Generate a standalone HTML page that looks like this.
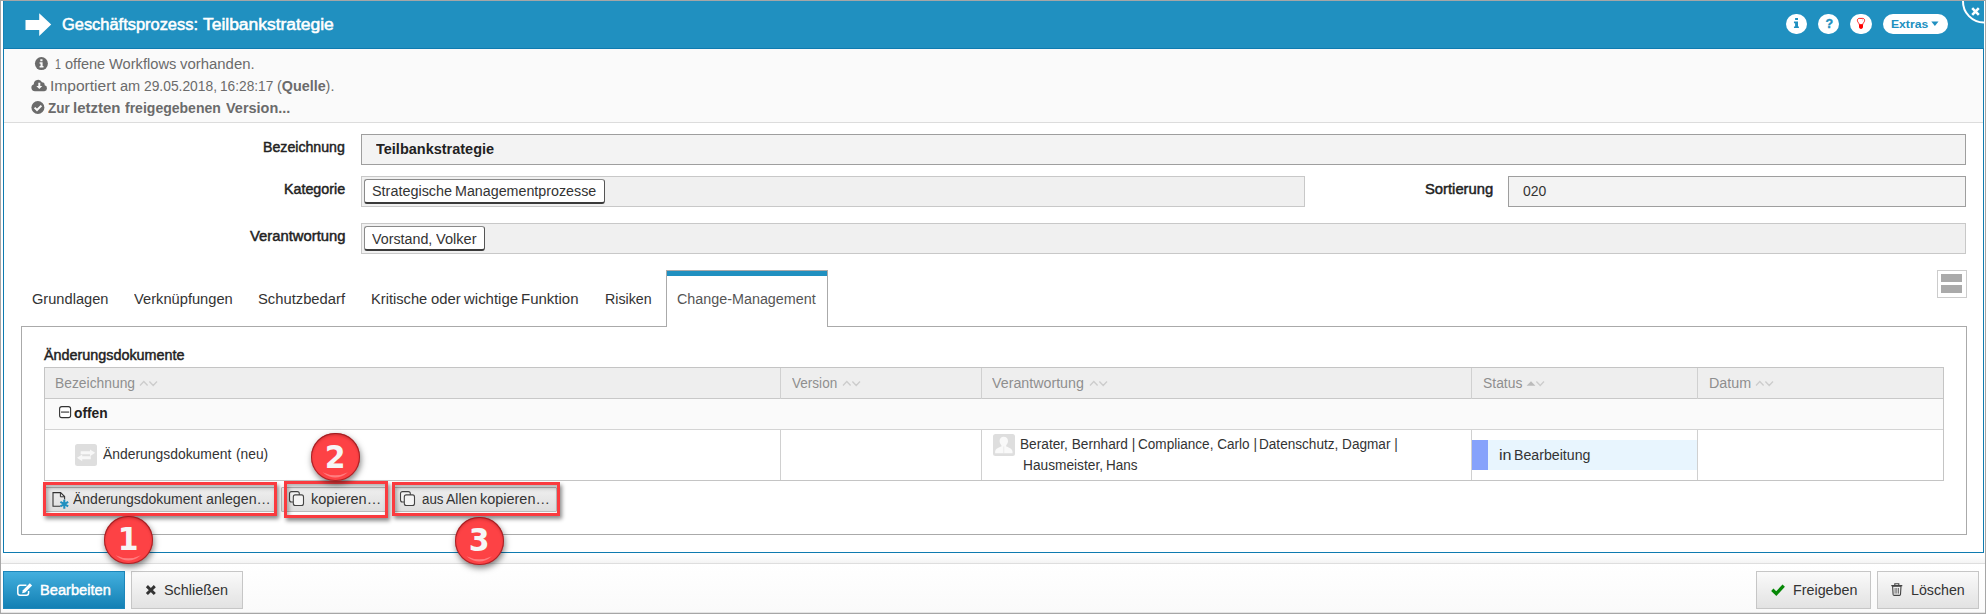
<!DOCTYPE html>
<html lang="de">
<head>
<meta charset="utf-8">
<title>Geschäftsprozess: Teilbankstrategie</title>
<style>
html,body{margin:0;padding:0}
body{width:1986px;height:614px;position:relative;overflow:hidden;background:#fff;font-family:"Liberation Sans",sans-serif;font-size:14px;color:#333}
.a{position:absolute;box-sizing:border-box}
.t{position:absolute;white-space:nowrap;line-height:1;transform-origin:0 0}
.t b{font-weight:bold}
svg{position:absolute;overflow:visible}
#frame{left:0;top:0;width:1986px;height:614px;border:1px solid #a6a6a6}
#win{left:3px;top:1px;width:1981px;height:552px;border:1px solid #0f7bb0;border-top:0}
#head{left:3px;top:1px;width:1981px;height:48px;background:#2090c0;border-bottom:1px solid #0f7bb0;border-left:1px solid #1582b5}
#info{left:4px;top:49px;width:1979px;height:74px;background:#fafafa;border-bottom:1px solid #dcdcdc}
.inp{background:#f3f3f3;border:1px solid #9e9e9e}
.box{background:#f0f0f0;border:1px solid #c8c8c8}
.tag{background:#fff;border:1px solid #8a8a8a;border-bottom:2px solid #3a3a3a;border-right-color:#555;border-radius:3px}
.hb{background:#fff;border-radius:11px}
#panel{left:21px;top:326px;width:1946px;height:209px;border:1px solid #aaa;background:#fff}
#tabact{left:666px;top:270px;width:162px;height:57px;border:1px solid #aaa;border-bottom:0;background:#fff}
#tabact i{position:absolute;left:0;top:0;width:160px;height:5px;background:#2090c0}
#tbl{left:44px;top:367px;width:1900px;height:114px;border:1px solid #c4c4c4;background:#fff}
#thead{left:45px;top:368px;width:1898px;height:31px;background:#eee;border-bottom:1px solid #c8c8c8}
#tgrp{left:45px;top:399px;width:1898px;height:31px;background:#fafafa;border-bottom:1px solid #d4d4d4}
.vl{width:1px;background:#d0d0d0}
.gbtn{border:1px solid #bbb;background:linear-gradient(#efefef,#dedede);border-radius:1px}
.red{border:3px solid #fa3b3f;box-shadow:2px 3px 4px rgba(0,0,0,.45), inset 2px 3px 4px rgba(0,0,0,.3)}
.ball{width:48.5px;height:48.5px;border-radius:50%;background:#fd4245;box-shadow:1px 3px 6px rgba(0,0,0,.5),inset 0 0 0 1px rgba(140,22,25,.7),inset 0 2px 3px rgba(140,20,22,.45)}
.ball span{position:absolute;left:0;width:48.5px;text-align:center;top:5.8px;font-family:"DejaVu Sans","Liberation Sans",sans-serif;font-weight:bold;font-size:32.5px;line-height:36px;color:#f6f6f6;transform:scaleX(.92)}
.ball svg{left:0;top:0}
#foot{left:1px;top:563px;width:1984px;height:50px;border-top:1px solid #dedede;border-bottom:1px solid #e4e4e4;background:linear-gradient(#fff,#fafafa)}
#gap{left:1px;top:553px;width:1984px;height:10px;background:linear-gradient(#fff 20%,#f4f4f4)}
.fbtn{top:571px;height:38px;border:1px solid #c6c6c6;background:linear-gradient(#fafafa,#e2e2e2)}
#fb1{left:3px;width:122px;border-color:#1c86ba;background:linear-gradient(#43afde,#1380b4)}
</style>
</head>
<body>
<div class="a" id="frame"></div>
<div class="a" id="win"></div>

<!-- header -->
<div class="a" id="head"></div>
<svg style="left:0;top:0" width="60" height="49"><polygon points="25.5,20 39.2,20 39.2,13.3 51.2,24.5 39.2,36 39.2,29.9 25.5,29.9" fill="#fff"/></svg>
<span class="t" style="left:62.34px;top:16.5px;font-size:16px;-webkit-text-stroke:0.55px currentColor;color:#fff;transform:scaleX(1.0263)">Geschäftsprozess:</span><span class="t" style="left:202.6px;top:16.5px;font-size:16px;-webkit-text-stroke:0.55px currentColor;color:#fff;transform:scaleX(1.0891)">Teilbankstrategie</span>
<div class="a hb" style="left:1786px;top:13.7px;width:21px;height:20.5px"></div>
<div class="a hb" style="left:1818px;top:13.7px;width:21px;height:20.5px"></div>
<div class="a hb" style="left:1850px;top:13.7px;width:22px;height:20.5px"></div>
<div class="a hb" style="left:1883px;top:13.7px;width:65px;height:20.5px"></div>
<svg style="left:1790px;top:16px" width="12" height="14" role="img" aria-label="Info"><path d="M5.100 2h2.900v2H5.100zM3.950 5.600h4.050v4.900h.900v1.450H3.950v-1.450h1.150v-3.300H3.950z" fill="#2090c0"/></svg>
<span class="t" style="left:1825.4px;top:17.5px;font-weight:bold;font-size:12.5px;color:#2090c0;-webkit-text-stroke:0.35px #2090c0">?</span>
<svg style="left:1855px;top:16px" width="12" height="15" viewBox="0 0 12 15"><path d="M4.200 2.400h3.600c1.100 0 1.800.900 1.800 2 0 1.700-1.700 2.500-1.900 4.300H4.300c-.200-1.800-1.900-2.600-1.900-4.300 0-1.100.700-2 1.800-2z" fill="#fff" stroke="#f00" stroke-width=".9"/><path d="M7 3.900h.9" stroke="#f66" stroke-width=".6"/><path d="M4 8.500h4v2.400c0 .900-.900 2-2 2s-2-1.100-2-2z" fill="#f00"/></svg>
<span class="t" style="left:1891.26px;top:18.5px;font-size:11.5px;font-weight:bold;color:#2090c0;transform:scaleX(1.0573)">Extras</span>
<svg style="left:1931px;top:21px" width="8" height="6"><path d="M0.3 0.6h7.2L3.9 5z" fill="#2090c0"/></svg>
<svg style="left:1956px;top:1px" width="28" height="24"><path d="M7 0A21 21 0 0 0 28 21.5" fill="none" stroke="#fff" stroke-width="2"/><path d="M16.2 7.2l6.6 6.6M22.8 7.2l-6.6 6.6" stroke="#fff" stroke-width="2.6" fill="none"/></svg>

<!-- info -->
<div class="a" id="info"></div>
<svg style="left:34px;top:56px" width="15" height="15" viewBox="0 0 15 15"><circle cx="7.4" cy="7.6" r="6.5" fill="#6b6b6b"/><path d="M6.3 3.2h2.2v2H6.3zM5.6 6.2h3v3.7h.9v1.6H5.6V9.9h.9V7.7h-.9z" fill="#fafafa"/></svg>
<svg style="left:31px;top:78px" width="17" height="14" viewBox="0 0 17 14"><path d="M4 13.2a3.6 3.6 0 0 1-1.2-7A4.3 4.3 0 0 1 11 4.3a2.9 2.9 0 0 1 2.7 3 3 3 0 0 1-.4 5.9z" fill="#6b6b6b"/><path d="M7.3 4.8h2v3.1h2L8.3 11 5.3 7.9h2z" fill="#fafafa"/></svg>
<svg style="left:31px;top:100px" width="15" height="15" viewBox="0 0 15 15"><circle cx="6.9" cy="7.5" r="6.5" fill="#6b6b6b"/><path d="M3.6 7.6l2.4 2.4 4.4-4.4" fill="none" stroke="#fafafa" stroke-width="2"/></svg>
<span class="t" style="left:54.84px;top:56.6px;color:#6b6b6b;transform:scaleX(0.7601)">1</span><span class="t" style="left:65.15px;top:56.6px;color:#6b6b6b;transform:scaleX(1.0398)">offene</span><span class="t" style="left:109.1px;top:56.6px;color:#6b6b6b;transform:scaleX(1.0462)">Workflows</span><span class="t" style="left:179.57px;top:56.6px;color:#6b6b6b;transform:scaleX(1.0657)">vorhanden.</span>
<span class="t" style="left:50.48px;top:78.7px;color:#6b6b6b;transform:scaleX(1.112)">Importiert</span><span class="t" style="left:120.21px;top:78.7px;color:#6b6b6b;transform:scaleX(1.0405)">am</span><span class="t" style="left:144.07px;top:78.7px;color:#6b6b6b;transform:scaleX(0.987)">29.05.2018,</span><span class="t" style="left:219.82px;top:78.7px;color:#6b6b6b;transform:scaleX(0.9774)">16:28:17</span><span class="t" style="left:276.78px;top:78.7px;color:#6b6b6b;transform:scaleX(1.0241)">(<b>Quelle</b>).</span>
<span class="t" style="left:47.99px;top:100.8px;font-weight:bold;color:#6b6b6b;transform:scaleX(0.9591)">Zur</span><span class="t" style="left:73.33px;top:100.8px;font-weight:bold;color:#6b6b6b;transform:scaleX(1.069)">letzten</span><span class="t" style="left:125.19px;top:100.8px;font-weight:bold;color:#6b6b6b;transform:scaleX(1.0013)">freigegebenen</span><span class="t" style="left:225.65px;top:100.8px;font-weight:bold;color:#6b6b6b;transform:scaleX(1.0322)">Version...</span>

<!-- form -->
<span class="t" style="left:263.41px;top:139.8px;-webkit-text-stroke:0.45px currentColor;color:#222;transform:scaleX(1.011)">Bezeichnung</span>
<div class="a inp" style="left:361px;top:134px;width:1605px;height:31px"></div>
<span class="t" style="left:376.26px;top:141.6px;font-weight:bold;color:#222;transform:scaleX(1.0349)">Teilbankstrategie</span>
<span class="t" style="left:283.8px;top:181.8px;-webkit-text-stroke:0.45px currentColor;color:#222;transform:scaleX(1.0199)">Kategorie</span>
<div class="a box" style="left:361px;top:176px;width:944px;height:31px"></div>
<div class="a tag" style="left:364px;top:179px;width:241px;height:25px"></div>
<span class="t" style="left:371.56px;top:183.8px;transform:scaleX(1.0287)">Strategische</span><span class="t" style="left:455.14px;top:183.8px;transform:scaleX(1.0193)">Managementprozesse</span>
<span class="t" style="left:1424.65px;top:181.8px;-webkit-text-stroke:0.45px currentColor;color:#222;transform:scaleX(1.0555)">Sortierung</span>
<div class="a inp" style="left:1508px;top:176px;width:458px;height:31px"></div>
<span class="t" style="left:1522.51px;top:183.8px;transform:scaleX(0.9976)">020</span>
<span class="t" style="left:249.9px;top:228.9px;-webkit-text-stroke:0.45px currentColor;color:#222;transform:scaleX(1.0571)">Verantwortung</span>
<div class="a box" style="left:361px;top:223px;width:1605px;height:31px"></div>
<div class="a tag" style="left:364px;top:226px;width:121px;height:25px"></div>
<span class="t" style="left:371.76px;top:232.4px;transform:scaleX(1.0196)">Vorstand,</span><span class="t" style="left:436.26px;top:232.4px;transform:scaleX(1.042)">Volker</span>

<!-- tabs -->
<div class="a" id="panel"></div>
<div class="a" id="tabact"><i></i></div>
<span class="t" style="left:32.01px;top:292.0px;transform:scaleX(1.0443)">Grundlagen</span>
<span class="t" style="left:134.16px;top:292.0px;transform:scaleX(1.0488)">Verknüpfungen</span>
<span class="t" style="left:258.33px;top:292.0px;transform:scaleX(1.0551)">Schutzbedarf</span>
<span class="t" style="left:371.01px;top:292.0px;transform:scaleX(1.0481)">Kritische</span><span class="t" style="left:430.94px;top:292.0px;transform:scaleX(1.0594)">oder</span><span class="t" style="left:464.16px;top:292.0px;transform:scaleX(1.0687)">wichtige</span><span class="t" style="left:521.29px;top:292.0px;transform:scaleX(1.0701)">Funktion</span>
<span class="t" style="left:604.84px;top:292.0px;transform:scaleX(1.0168)">Risiken</span>
<span class="t" style="left:677.01px;top:292.0px;color:#555;transform:scaleX(1.0242)">Change-Management</span>
<div class="a" style="left:1937px;top:270px;width:30px;height:28px;border:1px solid #ccc;background:#fff"></div>
<div class="a" style="left:1941px;top:274px;width:21px;height:8px;background:#aaa"></div>
<div class="a" style="left:1941px;top:285px;width:21px;height:8px;background:#aaa"></div>

<!-- table -->
<span class="t" style="left:43.59px;top:347.8px;-webkit-text-stroke:0.45px currentColor;color:#222;transform:scaleX(1.0256)">Änderungsdokumente</span>
<div class="a" id="tbl"></div>
<div class="a" id="thead"></div>
<div class="a" id="tgrp"></div>
<div class="a vl" style="left:780px;top:368px;height:31px"></div>
<div class="a vl" style="left:981px;top:368px;height:31px"></div>
<div class="a vl" style="left:1471px;top:368px;height:31px"></div>
<div class="a vl" style="left:1697px;top:368px;height:31px"></div>
<div class="a vl" style="left:780px;top:430px;height:50px"></div>
<div class="a vl" style="left:981px;top:430px;height:50px"></div>
<div class="a vl" style="left:1471px;top:430px;height:50px"></div>
<div class="a vl" style="left:1697px;top:430px;height:50px"></div>
<span class="t" style="left:54.87px;top:376.0px;color:#8e8e8e;transform:scaleX(0.989)">Bezeichnung</span>
<span class="t" style="left:792.27px;top:376.0px;color:#8e8e8e;transform:scaleX(0.9681)">Version</span>
<span class="t" style="left:992.46px;top:376.0px;color:#8e8e8e;transform:scaleX(1.0176)">Verantwortung</span>
<span class="t" style="left:1482.89px;top:376.0px;color:#8e8e8e;transform:scaleX(0.9925)">Status</span>
<span class="t" style="left:1708.54px;top:376.0px;color:#8e8e8e;transform:scaleX(1.0232)">Datum</span>
<svg style="left:139px;top:378.5px" width="20" height="9"><path d="M1 6.5l3.8-4 3.8 4M10.4 2.5l3.8 4 3.8-4" fill="none" stroke="#ccc" stroke-width="1.3"/></svg>
<svg style="left:842px;top:378.5px" width="20" height="9"><path d="M1 6.5l3.8-4 3.8 4M10.4 2.5l3.8 4 3.8-4" fill="none" stroke="#ccc" stroke-width="1.3"/></svg>
<svg style="left:1088.5px;top:378.5px" width="20" height="9"><path d="M1 6.5l3.8-4 3.8 4M10.4 2.5l3.8 4 3.8-4" fill="none" stroke="#ccc" stroke-width="1.3"/></svg>
<svg style="left:1526px;top:378.5px" width="20" height="9"><path d="M0.6 6.8l4.4-4.6 4.4 4.6z" fill="#bbb"/><path d="M10.4 2.5l3.8 4 3.8-4" fill="none" stroke="#ccc" stroke-width="1.3"/></svg>
<svg style="left:1754.5px;top:378.5px" width="20" height="9"><path d="M1 6.5l3.8-4 3.8 4M10.4 2.5l3.8 4 3.8-4" fill="none" stroke="#ccc" stroke-width="1.3"/></svg>

<svg style="left:58px;top:405px" width="15" height="15"><rect x="1.6" y="1.6" width="11" height="11" rx="2.2" fill="#fff" stroke="#333" stroke-width="1.1"/><path d="M3 7.100h8.200" stroke="#666" stroke-width="1.500"/></svg>
<span class="t" style="left:74.41px;top:405.6px;font-weight:bold;color:#222;transform:scaleX(0.9833)">offen</span>
<svg style="left:75px;top:444px" width="22" height="22"><rect width="22" height="22" rx="2.5" fill="#dedede"/><path d="M5.7 7.3h9.3V5.4l5.2 3.4-5.200 3.400v-1.900H5.700zM15.800 12.300H7.200v-1.900L2 13.800l5.200 3.400v-1.900h8.600z" fill="#f7f7f7"/></svg>
<span class="t" style="left:102.87px;top:446.5px;transform:scaleX(0.9926)">Änderungsdokument</span><span class="t" style="left:235.61px;top:446.5px;transform:scaleX(0.9849)">(neu)</span>
<svg style="left:993px;top:434px" width="22" height="22"><rect width="22" height="22" rx="2.5" fill="#dedede"/><path d="M10.700 2.800c-2.600 0-4.100 1.900-4.100 4.300 0 1.700.7 3.200 1.800 4.100v1.300c-2.400.9-5.800 1.900-6.300 5.100V19.200h17.400v-1.600c-.5-3.200-3.900-4.200-6.300-5.100v-1.300c1.100-.9 1.800-2.400 1.800-4.100 0-2.400-1.500-4.300-4.300-4.300z" fill="#f9f9f9"/><path d="M10.700 12.500v6.700" stroke="#e6e6e6" stroke-width=".7"/></svg>
<span class="t" style="left:1019.68px;top:436.7px;transform:scaleX(0.9771)">Berater, Bernhard |</span><span class="t" style="left:1137.85px;top:436.7px;transform:scaleX(0.9692)">Compliance, Carlo |</span><span class="t" style="left:1259.39px;top:436.7px;transform:scaleX(0.9707)">Datenschutz, Dagmar |</span>
<span class="t" style="left:1022.68px;top:457.7px;transform:scaleX(0.9794)">Hausmeister,</span><span class="t" style="left:1106.1px;top:457.7px;transform:scaleX(0.9627)">Hans</span>
<div class="a" style="left:1472px;top:440px;width:16px;height:30px;background:#86a2fb"></div>
<div class="a" style="left:1488px;top:440px;width:209px;height:30px;background:#e8f5fe"></div>
<span class="t" style="left:1499.27px;top:447.8px;transform:scaleX(1.1534)">in</span><span class="t" style="left:1514.45px;top:447.8px;transform:scaleX(1.0121)">Bearbeitung</span>

<!-- action buttons -->
<div class="a gbtn" style="left:45px;top:487px;width:229.5px;height:25px"></div>
<div class="a gbtn" style="left:281px;top:487px;width:106px;height:25px"></div>
<div class="a gbtn" style="left:394px;top:487px;width:163px;height:25px"></div>
<svg style="left:51px;top:491px" width="20" height="19"><path d="M9.400 15.200H2V1.600h7.600l4 4v3" fill="none" stroke="#333" stroke-width="1.100"/><path d="M9.400 1.800v4h4" fill="none" stroke="#333" stroke-width="1"/><path d="M13.300 8.700v9M9.400 10.950l7.800 4.500M9.400 15.450l7.800-4.500" stroke="#2090c0" stroke-width="2.100"/></svg>
<span class="t" style="left:72.77px;top:491.7px;transform:scaleX(0.9996)">Änderungsdokument</span><span class="t" style="left:205.62px;top:491.7px;transform:scaleX(1.0142)">anlegen…</span>
<svg style="left:288px;top:490px" width="18" height="17"><rect x="1.500" y="1.600" width="9.800" height="10.400" rx="2" fill="#f4f4f4" stroke="#444" stroke-width="1.100"/><rect x="5.300" y="4.900" width="10.200" height="10.600" rx="2" fill="#f4f4f4" stroke="#444" stroke-width="1.100"/></svg>
<span class="t" style="left:310.96px;top:491.7px;transform:scaleX(1.037)">kopieren…</span>
<svg style="left:399px;top:490px" width="18" height="17"><rect x="1.500" y="1.600" width="9.800" height="10.400" rx="2" fill="#f4f4f4" stroke="#444" stroke-width="1.100"/><rect x="5.300" y="4.900" width="10.200" height="10.600" rx="2" fill="#f4f4f4" stroke="#444" stroke-width="1.100"/></svg>
<span class="t" style="left:421.66px;top:491.7px;transform:scaleX(0.9528)">aus</span><span class="t" style="left:446.26px;top:491.7px;transform:scaleX(1.0003)">Allen</span><span class="t" style="left:480.26px;top:491.7px;transform:scaleX(1.0324)">kopieren…</span>
<div class="a red" style="left:43px;top:482px;width:234px;height:34px"></div>
<div class="a red" style="left:284px;top:481px;width:104px;height:37px"></div>
<div class="a red" style="left:392px;top:482px;width:168px;height:34px"></div>

<!-- footer -->
<div class="a" id="gap"></div>
<div class="a" id="foot"></div>
<div class="a fbtn" id="fb1"></div>
<div class="a fbtn" style="left:131px;width:112px"></div>
<div class="a fbtn" style="left:1756px;width:115px"></div>
<div class="a fbtn" style="left:1877px;width:102px"></div>
<svg style="left:16px;top:582px" width="18" height="15"><path d="M10.400 3.300H4a2.200 2.200 0 0 0-2.200 2.200v5.600a2.200 2.200 0 0 0 2.200 2.200h6.400a2.200 2.200 0 0 0 2.200-2.200V9" fill="none" stroke="#fff" stroke-width="1.500"/><path d="M13.800 1.300l2.300 2.300-6.900 6.900-3.100.800.800-3.100z" fill="#fff"/></svg>
<span class="t" style="left:40.18px;top:582.8px;-webkit-text-stroke:0.45px currentColor;color:#fff;transform:scaleX(1.0454)">Bearbeiten</span>
<svg style="left:145px;top:584px" width="12" height="12"><path d="M1.900 2.100l7.900 7.900M9.800 2.100l-7.900 7.900" stroke="#333" stroke-width="2.900" fill="none"/></svg>
<span class="t" style="left:164.36px;top:582.8px;transform:scaleX(1.0304)">Schließen</span>
<svg style="left:1771px;top:583.3px" width="15" height="13"><path d="M1.300 6.700l4 3.900 7.400-7.900" fill="none" stroke="#078807" stroke-width="3.300"/></svg>
<span class="t" style="left:1792.84px;top:582.8px;transform:scaleX(1.0215)">Freigeben</span>
<svg style="left:1890px;top:582px" width="14" height="15"><path d="M2.600 4.200h8.400l-.500 8.200q-.100 1-1 1H4.100q-.900 0-1-1z" fill="none" stroke="#444" stroke-width="1.100"/><path d="M1.300 3.600h11M4.800 3.400V1.700h4v1.700" fill="none" stroke="#444" stroke-width="1.100"/><path d="M5.100 6v5.600M6.800 6v5.600M8.500 6v5.600" stroke="#555" stroke-width=".8"/></svg>
<span class="t" style="left:1910.54px;top:582.8px;transform:scaleX(1.0159)">Löschen</span>

<!-- markers -->
<div class="a ball" style="left:104.200px;top:515.500px"><svg width="49" height="49"><path d="M11.500 39.200Q24.250 49.800 37 39.200Q24.250 45.400 11.500 39.200z" fill="#fe7d7f"/></svg><span>1</span></div>
<div class="a ball" style="left:311.400px;top:432.800px"><svg width="49" height="49"><path d="M11.500 39.200Q24.250 49.800 37 39.200Q24.250 45.400 11.500 39.200z" fill="#fe7d7f"/></svg><span>2</span></div>
<div class="a ball" style="left:455.200px;top:516.600px"><svg width="49" height="49"><path d="M11.500 39.200Q24.250 49.800 37 39.200Q24.250 45.400 11.500 39.200z" fill="#fe7d7f"/></svg><span>3</span></div>
</body>
</html>
